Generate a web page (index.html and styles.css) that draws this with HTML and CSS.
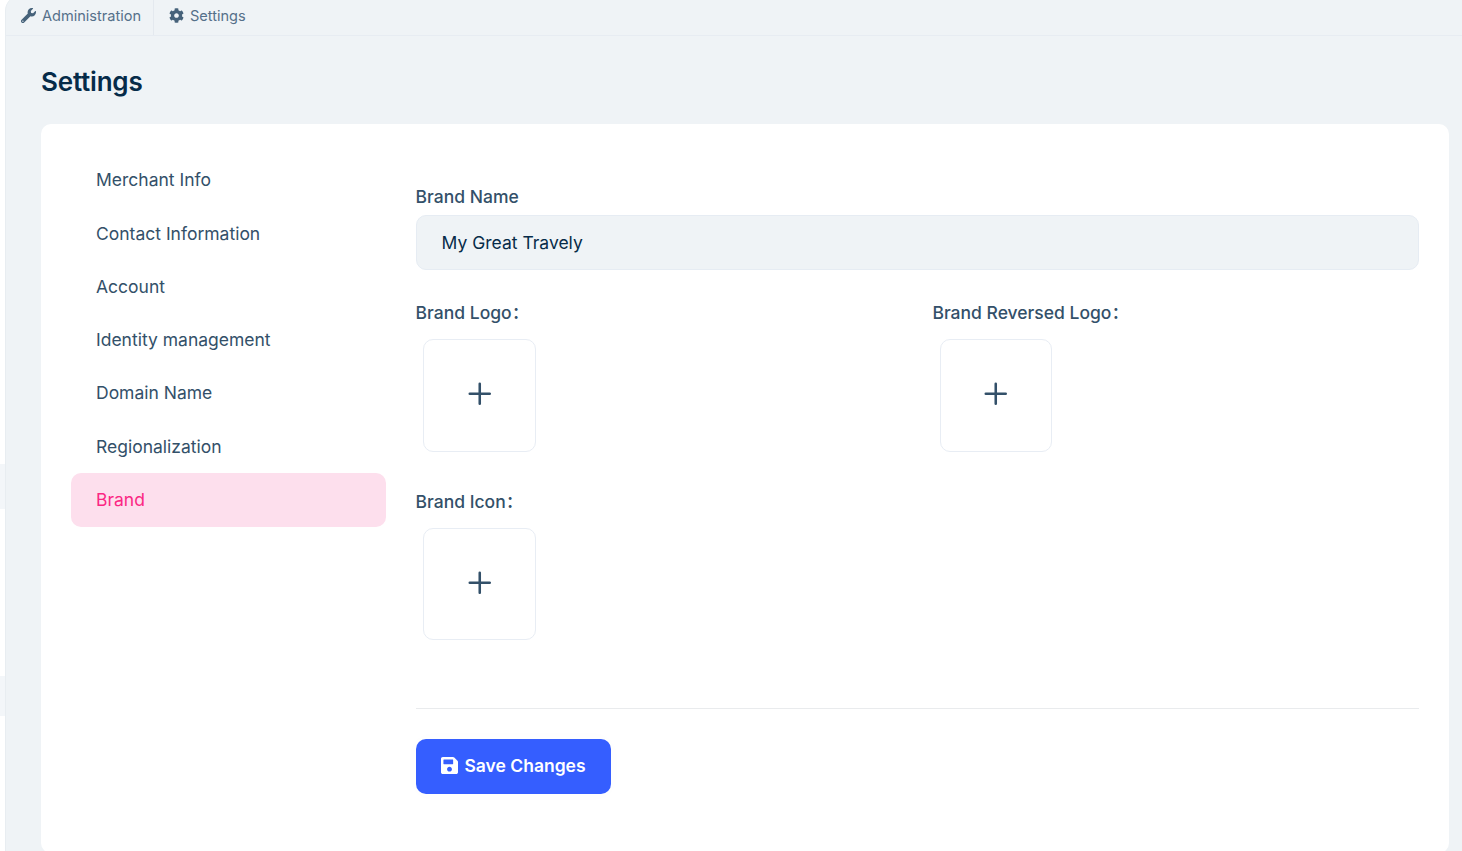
FILE: index.html
```html
<!DOCTYPE html>
<html lang="en">
<head>
<meta charset="utf-8">
<title>Settings</title>
<link rel="stylesheet" href="styles.css">
</head>
<body>
<div class="app">
  <aside class="rail"><span class="rail-mark rail-mark-top"></span><span class="rail-mark rail-mark-bottom"></span></aside>
  <div class="page">
    <nav class="tabs">
      <a class="tab tab-admin"><svg class="tab-icon" viewBox="0 0 512 512"><path d="M507.73 109.1c-2.24-9.03-13.54-12.09-20.12-5.51l-74.36 74.36-67.88-11.31-11.31-67.88 74.36-74.36c6.62-6.62 3.43-17.9-5.66-20.16-47.38-11.74-99.55.91-136.58 37.93-39.64 39.64-50.55 97.1-34.05 147.2L18.74 402.76c-24.99 24.99-24.99 65.51 0 90.5 24.99 24.99 65.51 24.99 90.5 0l213.21-213.21c50.12 16.71 107.47 5.68 147.37-34.22 37.07-37.07 49.7-89.32 37.91-136.73zM64 472c-13.25 0-24-10.75-24-24 0-13.26 10.75-24 24-24s24 10.74 24 24c0 13.25-10.75 24-24 24z"/></svg><span>Administration</span></a>
      <a class="tab tab-settings"><svg class="tab-icon" viewBox="0 0 512 512"><path d="M487.4 315.7l-42.6-24.6c4.3-23.2 4.3-47 0-70.2l42.6-24.6c4.9-2.8 7.1-8.6 5.5-14-11.1-35.6-30-67.8-54.7-94.6-3.8-4.1-10-5.1-14.8-2.3L380.8 110c-17.9-15.4-38.5-27.3-60.8-35.1V25.8c0-5.6-3.9-10.5-9.4-11.7-36.7-8.2-74.3-7.8-109.2 0-5.5 1.2-9.4 6.1-9.4 11.7V75c-22.2 7.9-42.8 19.8-60.8 35.1L88.7 85.5c-4.9-2.8-11-1.9-14.8 2.3-24.7 26.7-43.6 58.9-54.7 94.6-1.7 5.4.6 11.2 5.5 14L67.3 221c-4.3 23.2-4.3 47 0 70.2l-42.6 24.6c-4.9 2.8-7.1 8.6-5.5 14 11.1 35.6 30 67.8 54.7 94.6 3.8 4.1 10 5.1 14.8 2.3l42.6-24.6c17.9 15.4 38.5 27.3 60.8 35.1v49.2c0 5.6 3.9 10.5 9.4 11.7 36.7 8.2 74.3 7.8 109.2 0 5.5-1.2 9.4-6.1 9.4-11.7v-49.2c22.2-7.9 42.8-19.8 60.8-35.1l42.6 24.6c4.9 2.8 11 1.9 14.8-2.3 24.7-26.7 43.6-58.9 54.7-94.6 1.5-5.5-.7-11.3-5.6-14.1zM256 336c-44.1 0-80-35.9-80-80s35.9-80 80-80 80 35.9 80 80-35.9 80-80 80z"/></svg><span>Settings</span></a>
    </nav>
    <main class="content">
      <h1 class="title">Settings</h1>
      <section class="card">
        <nav class="menu">
          <a class="menu-item">Merchant Info</a>
          <a class="menu-item">Contact Information</a>
          <a class="menu-item">Account</a>
          <a class="menu-item">Identity management</a>
          <a class="menu-item">Domain Name</a>
          <a class="menu-item">Regionalization</a>
          <a class="menu-item menu-item-active">Brand</a>
        </nav>
        <form class="form">
          <label class="label" for="brand-name">Brand Name</label>
          <input class="input" id="brand-name" type="text" value="My Great Travely">
          <div class="uploads">
            <div class="upload"><span class="label">Brand Logo<span class="colon">：</span></span><div class="drop"><svg class="plus" viewBox="0 0 24 24"><path d="M12 1.8v20.4M1.8 12h20.4"/></svg></div></div>
            <div class="upload"><span class="label">Brand Reversed Logo<span class="colon">：</span></span><div class="drop"><svg class="plus" viewBox="0 0 24 24"><path d="M12 1.8v20.4M1.8 12h20.4"/></svg></div></div>
            <div class="upload"><span class="label">Brand Icon<span class="colon">：</span></span><div class="drop"><svg class="plus" viewBox="0 0 24 24"><path d="M12 1.8v20.4M1.8 12h20.4"/></svg></div></div>
          </div>
          <div class="actions">
            <button class="save" type="button"><svg class="save-icon" viewBox="0 32 448 448"><path d="M433.941 129.941l-83.882-83.882A48 48 0 0 0 316.118 32H48C21.49 32 0 53.49 0 80v352c0 26.51 21.49 48 48 48h352c26.51 0 48-21.49 48-48V163.882a48 48 0 0 0-14.059-33.941zM224 416c-35.346 0-64-28.654-64-64 0-35.346 28.654-64 64-64s64 28.654 64 64c0 35.346-28.654 64-64 64zm96-304.52V212c0 6.627-5.373 12-12 12H76c-6.627 0-12-5.373-12-12V108c0-6.627 5.373-12 12-12h228.52c3.183 0 6.235 1.264 8.485 3.515l3.48 3.48A11.996 11.996 0 0 1 320 111.48z"/></svg><span>Save Changes</span></button>
          </div>
        </form>
      </section>
    </main>
  </div>
</div>
</body>
</html>
```

FILE: styles.css
```css
* { box-sizing: border-box; }
body { margin: 0; overflow: hidden; background: #fff; font-family: Inter, "Noto Sans CJK SC", sans-serif; color: #335069; }
.app { display: flex; height: 851px; overflow: hidden; }
.rail { width: 5px; flex: none; display: flex; flex-direction: column; padding-top: 464px; }
.rail-mark { background: #f3f6f9; flex: none; }
.rail-mark-top { height: 45px; margin-bottom: 167px; }
.rail-mark-bottom { height: 40px; }
.page { flex: 1; height: 880px; margin-top: -5px; background: #eff3f6; border-left: 1px solid #e8edf1; border-top-left-radius: 16px; }
.tabs { display: flex; height: 41px; border-bottom: 1px solid #e7ecf2; }
.tab { display: flex; align-items: center; gap: 6px; padding-top: 2px; font-size: 14.55px; color: #55708a; line-height: 22px; }
.tab-admin { width: 148px; padding-left: 15px; border-right: 1px solid #e4e9ef; }
.tab-settings { padding-left: 15px; }
.tab-icon { width: 15px; height: 15px; margin-top: -1px; fill: #46627a; }
.content { padding: 26px 13px 0 35px; }
.title { margin: 0 0 22px; font-size: 26px; line-height: 40px; font-weight: 600; letter-spacing: -0.2px; color: #062b49; }
.card { display: flex; height: 729px; padding: 30px; border-radius: 10px; background: #fff; gap: 30px; }
.menu { width: 315px; flex: none; display: flex; flex-direction: column; margin-top: -0.7px; }
.menu-item { height: 53.27px; flex: none; padding-left: 25px; line-height: 53px; font-size: 17.5px; border-radius: 10px; }
.menu-item-active { height: 54px; background: #fddfed; color: #fb2783; }
.form { flex: 1; display: flex; flex-direction: column; padding-top: 29px; }
.label { display: block; margin-left: -0.4px; font-size: 17.5px; line-height: 28px; font-weight: 500; }
.colon { font-family: "Noto Sans CJK SC", sans-serif; line-height: 1; }
.input { height: 55px; margin-top: 4px; padding: 0 24.6px; border: 1px solid #e6ecf3; border-radius: 10px; background: #eff3f6; color: #062b49; font-family: inherit; font-size: 17.5px; outline: none; }
.uploads { display: grid; grid-template-columns: 516.8px 1fr; row-gap: 36.4px; padding: 29px 0 68px; }
.drop { display: flex; align-items: center; justify-content: center; width: 112.5px; height: 112.5px; margin: 12px 0 0 7px; border: 1px solid #e8edf4; border-radius: 10px; }
.plus { width: 23.5px; height: 23.5px; margin-top: -3px; fill: none; stroke: #335069; stroke-width: 2.6; stroke-linecap: round; }
.actions { padding-top: 30px; border-top: 1px solid #e9ebed; }
.save { display: flex; align-items: center; justify-content: center; gap: 6px; width: 195px; height: 55px; padding: 0 0 2px; border: 0; border-radius: 10px; background: #355eff; color: #fff; font-family: inherit; font-size: 17.5px; font-weight: 600; box-shadow: 0 0 18px rgba(20, 40, 80, .015); }
.save-icon { width: 17px; height: 17px; fill: #fff; }
```
